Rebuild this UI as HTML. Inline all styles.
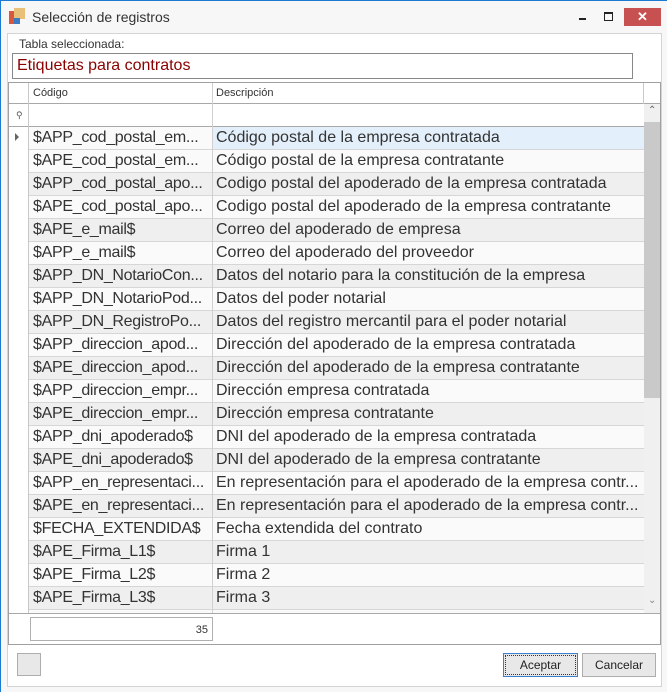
<!DOCTYPE html>
<html><head><meta charset="utf-8"><style>
*{box-sizing:border-box;margin:0;padding:0}
body{width:667px;height:692px;background:#f7f7f7;font-family:"Liberation Sans",sans-serif;position:relative;overflow:hidden;border:1px solid #1a7ad4;border-bottom:none;border-right:none}
.abs{position:absolute}
.title{left:31px;top:8px;font-size:14px;color:#333}
.panel{left:6px;top:32px;width:655px;height:654px;border:1px solid #d4d4d4;background:#fff}
.lbl{left:18px;top:36px;font-size:12px;color:#333}
.tb{left:11px;top:52px;width:621px;height:26px;border:1px solid #888;color:#8b0000;font-size:16px;padding:3px 4px;background:#fff}
.grid{left:7px;top:81px;width:653px;height:563px;border:1px solid #a0a0a0;background:#fff;overflow:hidden}
.row{position:absolute;left:20px;width:615px;height:23px;border-bottom:1px solid #d6d6d6;font-size:16px;color:#333;white-space:nowrap}
.row span{position:absolute;top:2px}
.c1{left:4px;width:178px;overflow:hidden;text-overflow:ellipsis;letter-spacing:-0.3px}
.c2{left:187px}
.btn{border:1px solid #adadad;background:#e8e8e8;font-size:12px;color:#222;text-align:center;line-height:22px}
</style></head><body>
<div class="abs" style="left:8px;top:10px;width:6px;height:13px;background:#d9583b"></div>
<div class="abs" style="left:13px;top:7px;width:11px;height:11px;background:#e8c07a"></div>
<div class="abs" style="left:13px;top:17px;width:6px;height:6px;background:#3d7bc4"></div>
<div class="abs title">Selección de registros</div>
<div class="abs" style="left:578px;top:17px;width:7px;height:2px;background:#222"></div>
<div class="abs" style="left:603px;top:11px;width:9px;height:9px;border:1px solid #222;border-top-width:2px"></div>
<div class="abs" style="left:623px;top:7px;width:37px;height:18px;background:#c75050;color:#fff;font-size:13px;text-align:center;line-height:18px;font-weight:bold">✕</div>
<div class="abs panel"></div>
<div class="abs lbl">Tabla seleccionada:</div>
<div class="abs tb">Etiquetas para contratos</div>
<div class="abs grid">
 <div class="abs" style="left:0;top:0;width:651px;height:21px;border-bottom:1px solid #a8a8a8"></div>
 <div class="abs" style="left:24px;top:4px;font-size:11px;color:#333">Código</div>
 <div class="abs" style="left:207px;top:4px;font-size:11px;color:#333">Descripción</div>
 <div class="abs" style="left:0;top:21px;width:635px;height:23px;border-bottom:1px solid #a8a8a8"></div>
 <div class="abs" style="left:7px;top:27px;font-size:9px;color:#555">⚲</div>
 <div class="abs" style="left:6px;top:50px;width:0;height:0;border-left:4px solid #666;border-top:4px solid transparent;border-bottom:4px solid transparent"></div>
 <div class="abs" style="left:0;top:0;width:635px;height:530px;overflow:hidden"><div id="rows"></div></div>
 <div class="abs" style="left:19px;top:0;width:1px;height:530px;background:#c8c8c8"></div>
 <div class="abs" style="left:634px;top:0;width:1px;height:21px;background:#c8c8c8"></div>
 <div class="abs" style="left:203px;top:0;width:1px;height:530px;background:#d0d0d0"></div>
 <div class="abs" style="left:635px;top:21px;width:16px;height:509px;background:#f0f0f0"></div>
 <div class="abs" style="left:635px;top:39px;width:16px;height:276px;background:#c9c9c9"></div>
 <div class="abs" style="left:639px;top:22px;font-size:10px;color:#666">⌃</div>
 <div class="abs" style="left:639px;top:512px;font-size:10px;color:#888">⌄</div>
 <div class="abs" style="left:0;top:530px;width:651px;height:1px;background:#a8a8a8"></div>
 <div class="abs" style="left:21px;top:534px;width:183px;height:24px;border:1px solid #b0b0b0;font-size:11px;text-align:right;padding:6px 4px;color:#333">35</div>
</div>
<div class="abs btn" style="left:16px;top:652px;width:24px;height:23px"></div>
<div class="abs btn" style="left:502px;top:652px;width:75px;height:24px;border-color:#3c7fd1;outline:1px dotted #333;outline-offset:-3px">Aceptar</div>
<div class="abs btn" style="left:581px;top:652px;width:74px;height:24px">Cancelar</div>
<script>
var d=[["$APP_cod_postal_em...","Código postal de la empresa contratada"],["$APE_cod_postal_em...","Código postal de la empresa contratante"],["$APP_cod_postal_apo...","Codigo postal del apoderado de la empresa contratada"],["$APE_cod_postal_apo...","Codigo postal del apoderado de la empresa contratante"],["$APE_e_mail$","Correo del apoderado de empresa"],["$APP_e_mail$","Correo del apoderado del proveedor"],["$APP_DN_NotarioCon...","Datos del notario para la constitución de la empresa"],["$APP_DN_NotarioPod...","Datos del poder notarial"],["$APP_DN_RegistroPo...","Datos del registro mercantil para el poder notarial"],["$APP_direccion_apod...","Dirección del apoderado de la empresa contratada"],["$APE_direccion_apod...","Dirección del apoderado de la empresa contratante"],["$APP_direccion_empr...","Dirección empresa contratada"],["$APE_direccion_empr...","Dirección empresa contratante"],["$APP_dni_apoderado$","DNI del apoderado de la empresa contratada"],["$APE_dni_apoderado$","DNI del apoderado de la empresa contratante"],["$APP_en_representaci...","En representación para el apoderado de la empresa contr..."],["$APE_en_representaci...","En representación para el apoderado de la empresa contr..."],["$FECHA_EXTENDIDA$","Fecha extendida del contrato"],["$APE_Firma_L1$","Firma 1"],["$APE_Firma_L2$","Firma 2"],["$APE_Firma_L3$","Firma 3"],["",""]];
var h="";d.forEach(function(r,i){var bg=i==0?"#e3effa":(i%2==0?"#efefef":"#fafafa");var bg2=i==0?"#fafafa":bg;
h+='<div class="row" style="top:'+(44+23*i)+'px;background:'+bg+'"><div class="abs" style="left:0;top:0;width:183px;height:22px;background:'+bg2+'"></div><span class="c1">'+r[0]+'</span><span class="c2">'+r[1]+'</span></div>';});
document.getElementById("rows").innerHTML=h;
</script>
</body></html>
